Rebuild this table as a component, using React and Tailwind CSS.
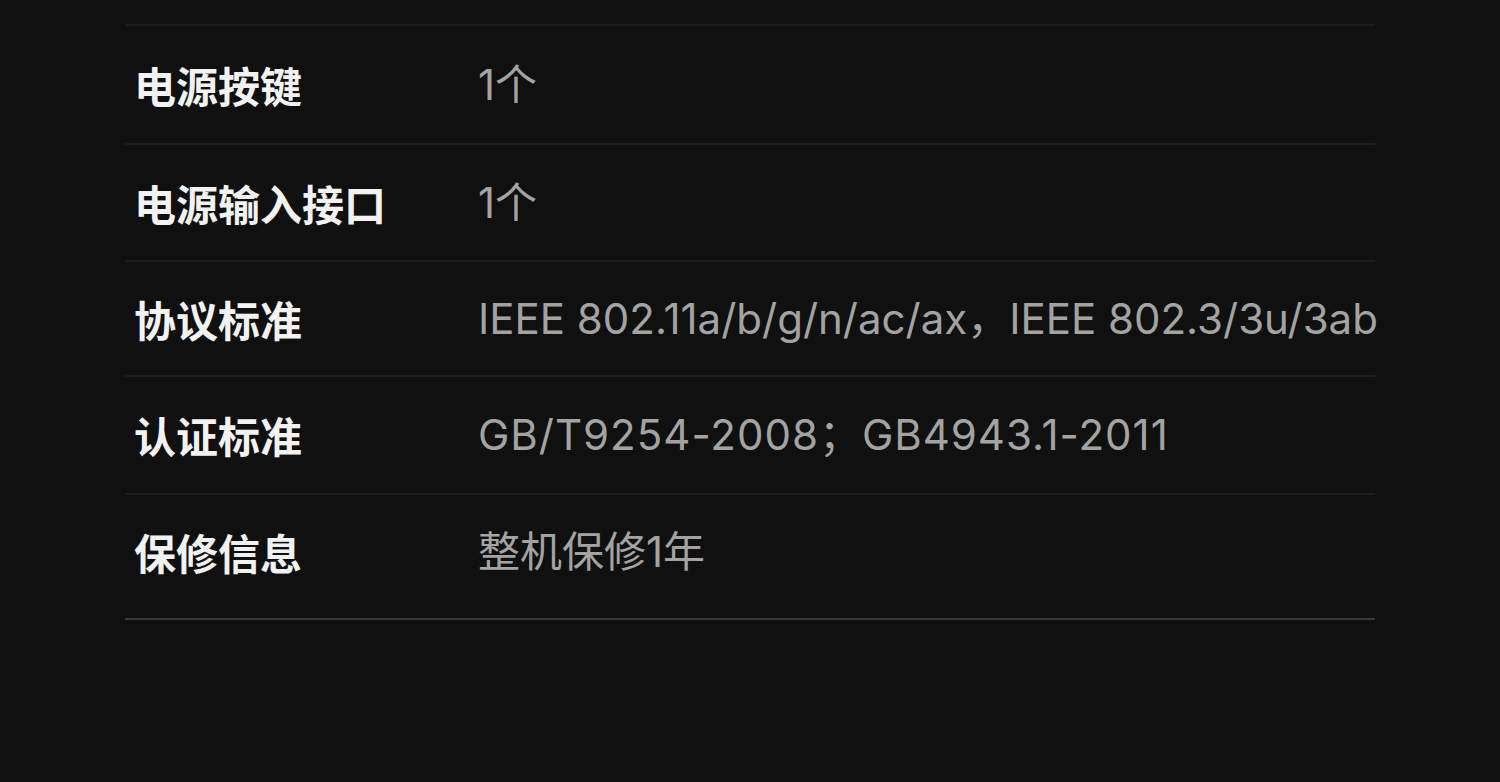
export default function App() {
  const rows = [
    { label: "电源按键", value: "1个", h: "h-[119px]", t: "" },
    { label: "电源输入接口", value: "1个", h: "h-[117px]", t: "" },
    { label: "协议标准", value: "IEEE 802.11a/b/g/n/ac/ax，IEEE 802.3/3u/3ab", h: "h-[115px]", t: "" },
    { label: "认证标准", value: "GB/T9254-2008；GB4943.1-2011", h: "h-[118px]", t: "tracking-[1px]" },
  ];
  const valueFont = { fontFamily: 'Inter, "Noto Sans CJK SC", sans-serif' };
  const labelFont = { fontFamily: '"Noto Sans CJK SC", sans-serif' };
  return (
    <div className="w-[1500px] h-[782px] bg-[#101010] overflow-hidden pt-[24px]">
      <div className="ml-[125px] w-[1250px]">
        {rows.map((r, i) => (
          <div key={i} className={`${r.h} border-t-2 border-[#1c1c1c] flex items-center`}>
            <div className="w-[353px] shrink-0 pl-[9px] text-[42px] font-bold text-[#f2f2f2] leading-none whitespace-nowrap" style={labelFont}>{r.label}</div>
            <div className={`text-[42px] text-[#a3a3a3] leading-none whitespace-nowrap ${r.t}`} style={valueFont}>{r.value}</div>
          </div>
        ))}
        <div className="h-[127px] border-t-2 border-b-2 border-t-[#1c1c1c] border-b-[#3a3a3a] flex items-center pb-[10px]">
          <div className="w-[353px] shrink-0 pl-[9px] text-[42px] font-bold text-[#f2f2f2] leading-none whitespace-nowrap" style={labelFont}>保修信息</div>
          <div className="text-[42px] text-[#a3a3a3] leading-none whitespace-nowrap" style={valueFont}>整机保修1年</div>
        </div>
      </div>
    </div>
  );
}
